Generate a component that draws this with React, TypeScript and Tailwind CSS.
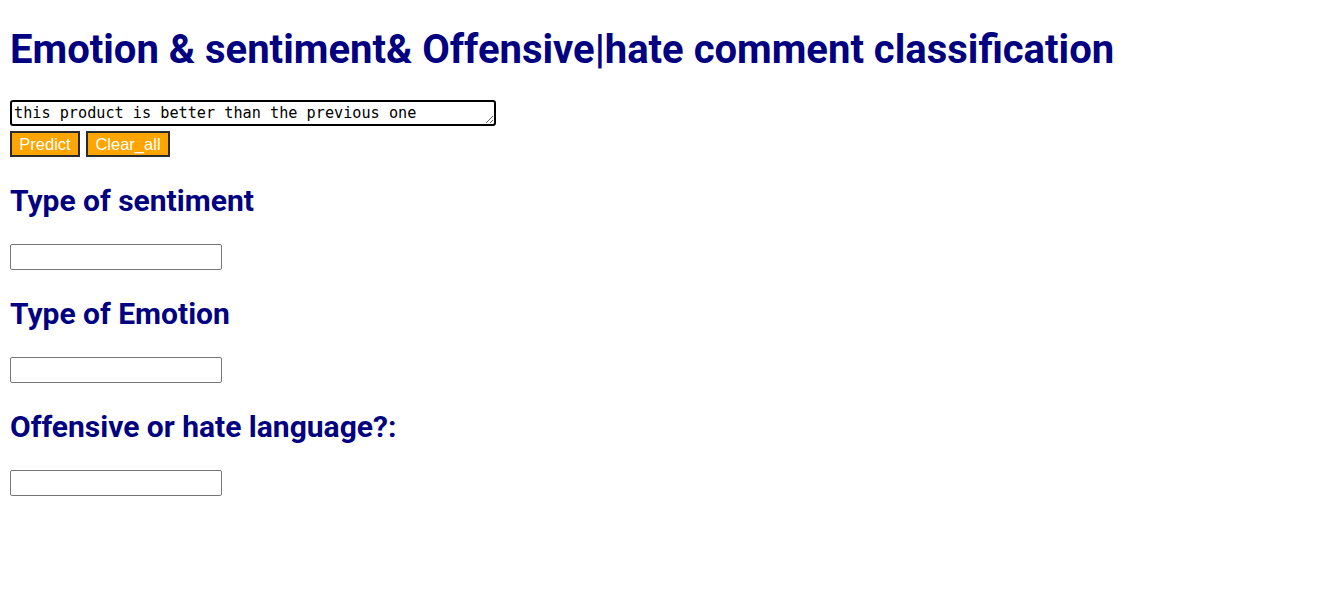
import { useState } from "react";

const sections = ["Type of sentiment", "Type of Emotion", "Offensive or hate language?:"];

export default function App() {
  const [text, setText] = useState("this product is better than the previous one");

  return (
    <div className="min-h-[602px] bg-white px-[10px] font-['Roboto',sans-serif]">
      <h1 className="pt-[30px] text-[40px] leading-none font-bold text-[#000080]">
        Emotion &amp; sentiment&amp; Offensive|hate comment classification
      </h1>

      <textarea
        value={text}
        onChange={(e) => setText(e.target.value)}
        className="mt-[30px] block h-[26px] w-[486px] resize rounded-[3px] border-2 border-black px-[2px] pt-[1px] pb-0 font-['DejaVu_Sans_Mono',monospace] text-[15.2px] leading-[21px] text-black outline-none"
      />

      <div className="mt-[5px] flex gap-[6px]">
        <button className="h-[26px] w-[70px] border-2 border-[#2b2b2b] bg-[#ffa500] font-['Liberation_Sans',sans-serif] text-[16.5px] leading-none text-white">
          Predict
        </button>
        <button className="h-[26px] w-[84px] border-2 border-[#2b2b2b] bg-[#ffa500] font-['Liberation_Sans',sans-serif] text-[16.5px] leading-none text-white">
          Clear_all
        </button>
      </div>

      {sections.map((label, i) => (
        <div key={i} className="mt-[29px]">
          <h3 className="text-[30px] leading-none font-bold text-[#000080]">{label}</h3>
          <input
            type="text"
            className="mt-[28px] block h-[26px] w-[212px] rounded-[2px] border border-[#767676] px-[2px] text-[13px]"
          />
        </div>
      ))}
    </div>
  );
}
